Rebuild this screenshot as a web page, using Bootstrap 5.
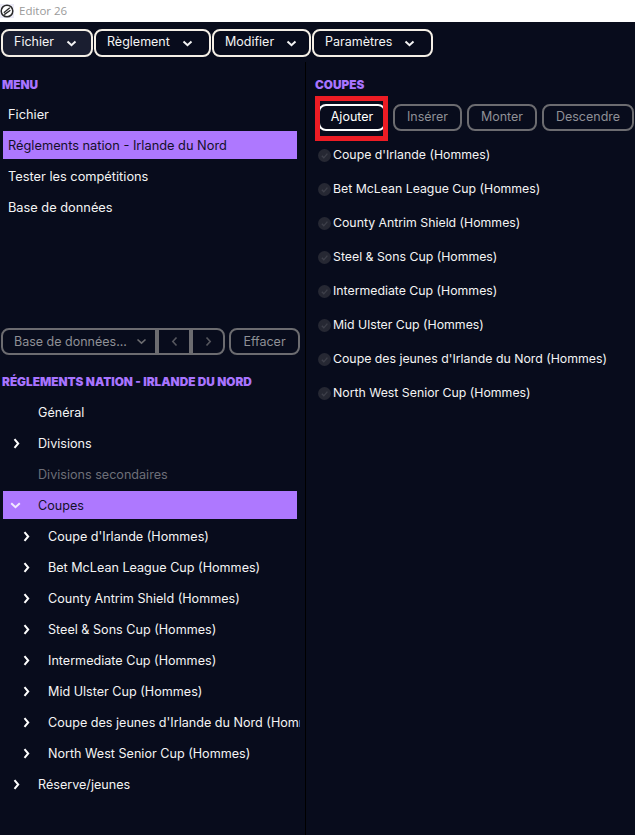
<!DOCTYPE html>
<html lang="fr">
<head>
<meta charset="utf-8">
<title>Editor 26</title>
<link rel="stylesheet" href="https://cdn.jsdelivr.net/npm/bootstrap@5.3.0/dist/css/bootstrap.min.css">
<style>
html,body{height:100%;}
body{background:#080c1c;color:#f4f4f4;font-family:"Inter","Liberation Sans",sans-serif;font-size:12.5px;line-height:1.2;overflow:hidden;}
.shell{width:635px;height:835px;}
.titlebar{height:22px;background:#fff;color:#9a9a9a;font-family:"Open Sans","Liberation Sans",sans-serif;font-size:11.5px;padding-left:0;gap:5px;}
.menubar{height:40px;padding:7px 1px 0;gap:1px;}
.menu-btn{height:28px;border:2px solid #f4efe6;border-radius:8px;background:#080c1c;color:#f4f4f4;font-size:12.5px;padding:0 0 0 11px;gap:12px;}
.menu-btn span{margin-bottom:3px;}
.menu-btn.first{background:#1a1e30;}
.w1{width:92px}.w2{width:117px}.w3{width:99px}.w4{width:121px}
.leftpane{width:306px;height:773px;border-right:1px solid #000;padding:0;font-size:12.6px;}
.rightpane{width:329px;padding-left:9px;font-size:12.3px;}
.sec-title{color:#a874ff;font-weight:900;font-size:11.8px;line-height:14px;}
.m-head{padding:16px 0 0 2px;height:38px;}
.nav-line{height:28px;margin:0 8px 3px 3px;padding-left:5px;padding-top:2px;color:#f4f4f4;font-size:12.8px;}
.nav-line.active-line,.tree-line.active-line{background:#ae78ff;color:#14102a;}
.tools{height:127px;align-items:flex-end;padding-left:1px;gap:4px;margin-top:7px;font-size:12.5px;}
.tool-group{width:224px;height:27px;border:2px solid #6c6c70;border-radius:8px;color:#8f9096;}
.tool-group .seg1{flex:1;padding-left:11px;gap:9px;}
.tool-group .seg2,.tool-group .seg3{width:34px;border-left:4px solid #6c6c70;justify-content:center;}
.tool-btn{height:27px;border:2px solid #6c6c70;border-radius:8px;color:#8f9096;background:transparent;justify-content:center;font-size:12.5px;}
.r-tools .tool-btn{padding-bottom:2px;}
.w-eff{width:71px;}
.t-head{padding:20px 0 0 2px;height:43px;}
.tree-line{height:28px;margin:0 8px 3px 3px;position:relative;padding-left:35px;padding-top:2px;color:#f4f4f4;}
.tree-line.deep{padding-left:45px;white-space:nowrap;overflow:hidden;margin-right:5px;}
.tree-line.off{color:#6d6f78;}
.tree-line svg{position:absolute;left:10px;top:9px;}
.tree-line.deep svg{left:20px;}
.r-head{padding-top:16px;height:34px;}
.r-tools{gap:5px;height:27px;padding-top:8px;box-sizing:content-box;margin-bottom:7px;}
.add-wrap{position:relative;margin-left:3px;margin-right:2px;}
.add-btn{width:68px;border-color:#fff;color:#fff;}
.red-box{position:absolute;left:-3px;right:-2px;top:-8px;bottom:-10px;border:5px solid #ed1c24;pointer-events:none;}
.w-ins{width:69px}.w-mon{width:70px}.w-des{width:92px}
.cup-line{height:34px;padding-left:3px;gap:2px;color:#f4f4f4;}
.tick{flex:0 0 13px;}
</style>
</head>
<body>
<div class="shell d-flex flex-column">
  <div class="titlebar d-flex align-items-center">
    <svg width="14" height="14" viewBox="0 0 14 14"><rect width="14" height="14" fill="#ecebf7"/><circle cx="7" cy="7" r="5.8" fill="#fff" stroke="#2a2a2a" stroke-width="1.5"/><path d="M3.8 8.8 9.8 3.8M4.2 10.6 10.4 6.2" stroke="#2a2a2a" stroke-width="1.3" fill="none"/></svg>
    <span>Editor 26</span>
  </div>
  <div class="menubar d-flex">
    <div class="menu-btn first w1 d-flex align-items-center"><span>Fichier</span><svg width="11" height="7" viewBox="0 0 11 7"><path d="M1.5 1.5 5.5 5.2 9.5 1.5" fill="none" stroke="#f4f4f4" stroke-width="2"/></svg></div>
    <div class="menu-btn w2 d-flex align-items-center"><span>Règlement</span><svg width="11" height="7" viewBox="0 0 11 7"><path d="M1.5 1.5 5.5 5.2 9.5 1.5" fill="none" stroke="#f4f4f4" stroke-width="2"/></svg></div>
    <div class="menu-btn w3 d-flex align-items-center"><span>Modifier</span><svg width="11" height="7" viewBox="0 0 11 7"><path d="M1.5 1.5 5.5 5.2 9.5 1.5" fill="none" stroke="#f4f4f4" stroke-width="2"/></svg></div>
    <div class="menu-btn w4 d-flex align-items-center"><span>Paramètres</span><svg width="11" height="7" viewBox="0 0 11 7"><path d="M1.5 1.5 5.5 5.2 9.5 1.5" fill="none" stroke="#f4f4f4" stroke-width="2"/></svg></div>
  </div>
  <div class="d-flex flex-grow-1">
    <div class="leftpane">
      <div class="sec-title m-head">MENU</div>
      <div class="nav-line d-flex align-items-center">Fichier</div>
      <div class="nav-line active-line d-flex align-items-center">Réglements nation - Irlande du Nord</div>
      <div class="nav-line d-flex align-items-center">Tester les compétitions</div>
      <div class="nav-line d-flex align-items-center">Base de données</div>
      <div class="tools d-flex">
        <div class="tool-group d-flex">
          <div class="seg1 d-flex align-items-center"><span>Base de données...</span><svg width="11" height="7" viewBox="0 0 11 7"><path d="M1.5 1.5 5.5 5.2 9.5 1.5" fill="none" stroke="#6c6c70" stroke-width="1.6"/></svg></div>
          <div class="seg2 d-flex align-items-center"><svg width="7" height="11" viewBox="0 0 7 11"><path d="M5.5 1.5 1.8 5.5 5.5 9.5" fill="none" stroke="#56575e" stroke-width="1.6"/></svg></div>
          <div class="seg3 d-flex align-items-center"><svg width="7" height="11" viewBox="0 0 7 11"><path d="M1.5 1.5 5.2 5.5 1.5 9.5" fill="none" stroke="#56575e" stroke-width="1.6"/></svg></div>
        </div>
        <div class="tool-btn w-eff d-flex align-items-center">Effacer</div>
      </div>
      <div class="sec-title t-head">RÉGLEMENTS NATION - IRLANDE DU NORD</div>
      <div class="tree-line d-flex align-items-center">Général</div>
      <div class="tree-line d-flex align-items-center"><svg width="7" height="11" viewBox="0 0 7 11"><path d="M1.5 1.2 5.2 5.5 1.5 9.8" fill="none" stroke="#fff" stroke-width="2"/></svg>Divisions</div>
      <div class="tree-line off d-flex align-items-center">Divisions secondaires</div>
      <div class="tree-line active-line d-flex align-items-center"><svg width="11" height="7" viewBox="0 0 11 7" style="top:11px;left:7px"><path d="M1.2 1.2 5.5 5.2 9.8 1.2" fill="none" stroke="#f2eaff" stroke-width="2"/></svg>Coupes</div>
      <div class="tree-line deep d-flex align-items-center"><svg width="7" height="11" viewBox="0 0 7 11"><path d="M1.5 1.2 5.2 5.5 1.5 9.8" fill="none" stroke="#fff" stroke-width="2"/></svg>Coupe d'Irlande (Hommes)</div>
      <div class="tree-line deep d-flex align-items-center"><svg width="7" height="11" viewBox="0 0 7 11"><path d="M1.5 1.2 5.2 5.5 1.5 9.8" fill="none" stroke="#fff" stroke-width="2"/></svg>Bet McLean League Cup (Hommes)</div>
      <div class="tree-line deep d-flex align-items-center"><svg width="7" height="11" viewBox="0 0 7 11"><path d="M1.5 1.2 5.2 5.5 1.5 9.8" fill="none" stroke="#fff" stroke-width="2"/></svg>County Antrim Shield (Hommes)</div>
      <div class="tree-line deep d-flex align-items-center"><svg width="7" height="11" viewBox="0 0 7 11"><path d="M1.5 1.2 5.2 5.5 1.5 9.8" fill="none" stroke="#fff" stroke-width="2"/></svg>Steel &amp; Sons Cup (Hommes)</div>
      <div class="tree-line deep d-flex align-items-center"><svg width="7" height="11" viewBox="0 0 7 11"><path d="M1.5 1.2 5.2 5.5 1.5 9.8" fill="none" stroke="#fff" stroke-width="2"/></svg>Intermediate Cup (Hommes)</div>
      <div class="tree-line deep d-flex align-items-center"><svg width="7" height="11" viewBox="0 0 7 11"><path d="M1.5 1.2 5.2 5.5 1.5 9.8" fill="none" stroke="#fff" stroke-width="2"/></svg>Mid Ulster Cup (Hommes)</div>
      <div class="tree-line deep d-flex align-items-center"><svg width="7" height="11" viewBox="0 0 7 11"><path d="M1.5 1.2 5.2 5.5 1.5 9.8" fill="none" stroke="#fff" stroke-width="2"/></svg>Coupe des jeunes d'Irlande du Nord (Hommes)</div>
      <div class="tree-line deep d-flex align-items-center"><svg width="7" height="11" viewBox="0 0 7 11"><path d="M1.5 1.2 5.2 5.5 1.5 9.8" fill="none" stroke="#fff" stroke-width="2"/></svg>North West Senior Cup (Hommes)</div>
      <div class="tree-line d-flex align-items-center"><svg width="7" height="11" viewBox="0 0 7 11"><path d="M1.5 1.2 5.2 5.5 1.5 9.8" fill="none" stroke="#fff" stroke-width="2"/></svg>Réserve/jeunes</div>
    </div>
    <div class="rightpane">
      <div class="sec-title r-head">COUPES</div>
      <div class="r-tools d-flex">
        <div class="add-wrap"><div class="tool-btn add-btn d-flex align-items-center">Ajouter</div><span class="red-box"></span></div>
        <div class="tool-btn w-ins d-flex align-items-center">Insérer</div>
        <div class="tool-btn w-mon d-flex align-items-center">Monter</div>
        <div class="tool-btn w-des d-flex align-items-center">Descendre</div>
      </div>
      <div class="cup-line d-flex align-items-center"><svg class="tick" width="13" height="13" viewBox="0 0 13 13"><circle cx="6.5" cy="6.5" r="6.5" fill="#262833"/><path d="M3.8 6.8 5.8 8.8 9.4 4.6" fill="none" stroke="#3e404a" stroke-width="1.3"/></svg>Coupe d'Irlande (Hommes)</div>
      <div class="cup-line d-flex align-items-center"><svg class="tick" width="13" height="13" viewBox="0 0 13 13"><circle cx="6.5" cy="6.5" r="6.5" fill="#262833"/><path d="M3.8 6.8 5.8 8.8 9.4 4.6" fill="none" stroke="#3e404a" stroke-width="1.3"/></svg>Bet McLean League Cup (Hommes)</div>
      <div class="cup-line d-flex align-items-center"><svg class="tick" width="13" height="13" viewBox="0 0 13 13"><circle cx="6.5" cy="6.5" r="6.5" fill="#262833"/><path d="M3.8 6.8 5.8 8.8 9.4 4.6" fill="none" stroke="#3e404a" stroke-width="1.3"/></svg>County Antrim Shield (Hommes)</div>
      <div class="cup-line d-flex align-items-center"><svg class="tick" width="13" height="13" viewBox="0 0 13 13"><circle cx="6.5" cy="6.5" r="6.5" fill="#262833"/><path d="M3.8 6.8 5.8 8.8 9.4 4.6" fill="none" stroke="#3e404a" stroke-width="1.3"/></svg>Steel &amp; Sons Cup (Hommes)</div>
      <div class="cup-line d-flex align-items-center"><svg class="tick" width="13" height="13" viewBox="0 0 13 13"><circle cx="6.5" cy="6.5" r="6.5" fill="#262833"/><path d="M3.8 6.8 5.8 8.8 9.4 4.6" fill="none" stroke="#3e404a" stroke-width="1.3"/></svg>Intermediate Cup (Hommes)</div>
      <div class="cup-line d-flex align-items-center"><svg class="tick" width="13" height="13" viewBox="0 0 13 13"><circle cx="6.5" cy="6.5" r="6.5" fill="#262833"/><path d="M3.8 6.8 5.8 8.8 9.4 4.6" fill="none" stroke="#3e404a" stroke-width="1.3"/></svg>Mid Ulster Cup (Hommes)</div>
      <div class="cup-line d-flex align-items-center"><svg class="tick" width="13" height="13" viewBox="0 0 13 13"><circle cx="6.5" cy="6.5" r="6.5" fill="#262833"/><path d="M3.8 6.8 5.8 8.8 9.4 4.6" fill="none" stroke="#3e404a" stroke-width="1.3"/></svg>Coupe des jeunes d'Irlande du Nord (Hommes)</div>
      <div class="cup-line d-flex align-items-center"><svg class="tick" width="13" height="13" viewBox="0 0 13 13"><circle cx="6.5" cy="6.5" r="6.5" fill="#262833"/><path d="M3.8 6.8 5.8 8.8 9.4 4.6" fill="none" stroke="#3e404a" stroke-width="1.3"/></svg>North West Senior Cup (Hommes)</div>
    </div>
  </div>
</div>
<script src="https://cdn.jsdelivr.net/npm/bootstrap@5.3.0/dist/js/bootstrap.bundle.min.js"></script>
</body>
</html>
